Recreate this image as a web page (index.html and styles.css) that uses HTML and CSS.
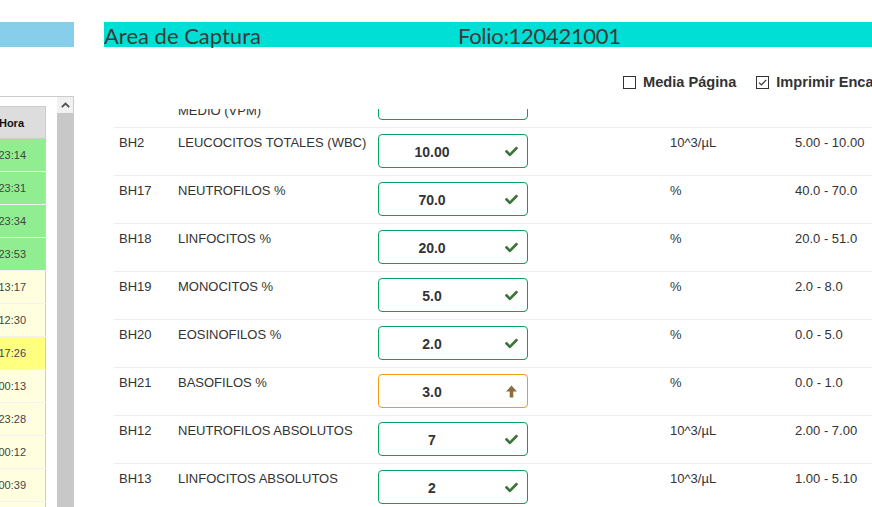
FILE: index.html
```html
<!DOCTYPE html>
<html lang="es">
<head>
  <meta charset="UTF-8">
  <title>Area de Captura</title>
  <link rel="stylesheet" href="styles.css">
</head>
<body>
  <div class="page">
    <aside class="side">
      <div class="side-title"></div>
      <div class="side-box">
        <div class="side-scroll">
          <table class="times">
            <thead>
              <tr><th class="col-date">Fecha</th><th class="col-time">Hora</th></tr>
            </thead>
            <tbody>
              <tr class="done"><td>12/04/2021</td><td>23:14</td></tr>
              <tr class="done"><td>12/04/2021</td><td>23:31</td></tr>
              <tr class="done"><td>12/04/2021</td><td>23:34</td></tr>
              <tr class="done"><td>12/04/2021</td><td>23:53</td></tr>
              <tr class="pending"><td>13/04/2021</td><td>13:17</td></tr>
              <tr class="pending"><td>13/04/2021</td><td>12:30</td></tr>
              <tr class="current"><td>13/04/2021</td><td>17:26</td></tr>
              <tr class="pending"><td>14/04/2021</td><td>00:13</td></tr>
              <tr class="pending"><td>14/04/2021</td><td>23:28</td></tr>
              <tr class="pending"><td>15/04/2021</td><td>00:12</td></tr>
              <tr class="pending"><td>15/04/2021</td><td>00:39</td></tr>
              <tr class="pending"><td>15/04/2021</td><td>01:05</td></tr>
            </tbody>
          </table>
        </div>
        <div class="scrollbar">
          <div class="scroll-btn">
            <svg width="9" height="6" viewBox="0 0 9 6"><path d="M0.8 5.2 L4.5 1.5 L8.2 5.2" fill="none" stroke="#505050" stroke-width="1.8"/></svg>
          </div>
          <div class="scroll-thumb"></div>
        </div>
      </div>
    </aside>

    <main class="main">
      <h1 class="capture-bar">
        <span class="capture-title">Area de Captura</span>
        <span class="folio">Folio:120421001</span>
      </h1>

      <div class="options">
        <label class="option">
          <span class="box"></span>
          <span>Media Página</span>
        </label>
        <label class="option">
          <span class="box">
            <svg width="11" height="11" viewBox="0 0 11 11"><path d="M2 5.6 L4.4 8 L9.2 2.8" fill="none" stroke="#333" stroke-width="1.2"/></svg>
          </span>
          <span>Imprimir Encabezado</span>
        </label>
      </div>

      <div class="results">
        <div class="results-list">
          <div class="result-row">
            <div class="cell">BH9</div>
            <div class="cell">VOLUMEN PLAQUETARIO MEDIO (VPM)</div>
            <div class="cell"><div class="value ok"><span class="num">9.5</span><span class="icon"></span></div></div>
            <div class="cell">fL</div>
            <div class="cell">7.0 - 11.0</div>
          </div>

          <div class="result-row">
            <div class="cell">BH2</div>
            <div class="cell">LEUCOCITOS TOTALES (WBC)</div>
            <div class="cell"><div class="value ok"><span class="num">10.00</span>
              <svg class="icon" viewBox="0 0 512 512"><path d="M173.9 439.4l-166.4-166.4c-10-10-10-26.2 0-36.2l36.2-36.2c10-10 26.2-10 36.2 0L192 312.7 432.1 72.6c10-10 26.2-10 36.2 0l36.2 36.2c10 10 10 26.2 0 36.2l-294.4 294.4c-10 10-26.2 10-36.2 0z"/></svg></div></div>
            <div class="cell">10^3/µL</div>
            <div class="cell">5.00 - 10.00</div>
          </div>

          <div class="result-row">
            <div class="cell">BH17</div>
            <div class="cell">NEUTROFILOS %</div>
            <div class="cell"><div class="value ok"><span class="num">70.0</span>
              <svg class="icon" viewBox="0 0 512 512"><path d="M173.9 439.4l-166.4-166.4c-10-10-10-26.2 0-36.2l36.2-36.2c10-10 26.2-10 36.2 0L192 312.7 432.1 72.6c10-10 26.2-10 36.2 0l36.2 36.2c10 10 10 26.2 0 36.2l-294.4 294.4c-10 10-26.2 10-36.2 0z"/></svg></div></div>
            <div class="cell">%</div>
            <div class="cell">40.0 - 70.0</div>
          </div>

          <div class="result-row">
            <div class="cell">BH18</div>
            <div class="cell">LINFOCITOS %</div>
            <div class="cell"><div class="value ok"><span class="num">20.0</span>
              <svg class="icon" viewBox="0 0 512 512"><path d="M173.9 439.4l-166.4-166.4c-10-10-10-26.2 0-36.2l36.2-36.2c10-10 26.2-10 36.2 0L192 312.7 432.1 72.6c10-10 26.2-10 36.2 0l36.2 36.2c10 10 10 26.2 0 36.2l-294.4 294.4c-10 10-26.2 10-36.2 0z"/></svg></div></div>
            <div class="cell">%</div>
            <div class="cell">20.0 - 51.0</div>
          </div>

          <div class="result-row">
            <div class="cell">BH19</div>
            <div class="cell">MONOCITOS %</div>
            <div class="cell"><div class="value ok"><span class="num">5.0</span>
              <svg class="icon" viewBox="0 0 512 512"><path d="M173.9 439.4l-166.4-166.4c-10-10-10-26.2 0-36.2l36.2-36.2c10-10 26.2-10 36.2 0L192 312.7 432.1 72.6c10-10 26.2-10 36.2 0l36.2 36.2c10 10 10 26.2 0 36.2l-294.4 294.4c-10 10-26.2 10-36.2 0z"/></svg></div></div>
            <div class="cell">%</div>
            <div class="cell">2.0 - 8.0</div>
          </div>

          <div class="result-row">
            <div class="cell">BH20</div>
            <div class="cell">EOSINOFILOS %</div>
            <div class="cell"><div class="value ok"><span class="num">2.0</span>
              <svg class="icon" viewBox="0 0 512 512"><path d="M173.9 439.4l-166.4-166.4c-10-10-10-26.2 0-36.2l36.2-36.2c10-10 26.2-10 36.2 0L192 312.7 432.1 72.6c10-10 26.2-10 36.2 0l36.2 36.2c10 10 10 26.2 0 36.2l-294.4 294.4c-10 10-26.2 10-36.2 0z"/></svg></div></div>
            <div class="cell">%</div>
            <div class="cell">0.0 - 5.0</div>
          </div>

          <div class="result-row">
            <div class="cell">BH21</div>
            <div class="cell">BASOFILOS %</div>
            <div class="cell"><div class="value high"><span class="num">3.0</span>
              <svg class="icon" viewBox="0 0 12 13"><path d="M6 0.5 L11.5 6.5 L7.8 6.5 L7.8 12.5 L4.2 12.5 L4.2 6.5 L0.5 6.5 Z"/></svg></div></div>
            <div class="cell">%</div>
            <div class="cell">0.0 - 1.0</div>
          </div>

          <div class="result-row">
            <div class="cell">BH12</div>
            <div class="cell">NEUTROFILOS ABSOLUTOS</div>
            <div class="cell"><div class="value ok"><span class="num">7</span>
              <svg class="icon" viewBox="0 0 512 512"><path d="M173.9 439.4l-166.4-166.4c-10-10-10-26.2 0-36.2l36.2-36.2c10-10 26.2-10 36.2 0L192 312.7 432.1 72.6c10-10 26.2-10 36.2 0l36.2 36.2c10 10 10 26.2 0 36.2l-294.4 294.4c-10 10-26.2 10-36.2 0z"/></svg></div></div>
            <div class="cell">10^3/µL</div>
            <div class="cell">2.00 - 7.00</div>
          </div>

          <div class="result-row">
            <div class="cell">BH13</div>
            <div class="cell">LINFOCITOS ABSOLUTOS</div>
            <div class="cell"><div class="value ok"><span class="num">2</span>
              <svg class="icon" viewBox="0 0 512 512"><path d="M173.9 439.4l-166.4-166.4c-10-10-10-26.2 0-36.2l36.2-36.2c10-10 26.2-10 36.2 0L192 312.7 432.1 72.6c10-10 26.2-10 36.2 0l36.2 36.2c10 10 10 26.2 0 36.2l-294.4 294.4c-10 10-26.2 10-36.2 0z"/></svg></div></div>
            <div class="cell">10^3/µL</div>
            <div class="cell">1.00 - 5.10</div>
          </div>
        </div>
      </div>
    </main>
  </div>
</body>
</html>
```

FILE: styles.css
```css
html, body {
  overflow: hidden;
}

body {
  margin: 0;
  font-family: "Liberation Sans", Arial, sans-serif;
  color: #333;
  background-color: white;
}

.page {
  display: flex;
  padding-top: 22px;
  height: 485px;
}

/* left list of orders */
.side {
  width: 74px;
  flex-shrink: 0;
}

.side-title {
  height: 25px;
  background-color: #87ceeb;
  margin-bottom: 49px;
}

.side-box {
  display: flex;
  height: 420px;
  border-top: 1px solid #ccc;
  border-right: 1px solid #ccc;
}

.side-scroll {
  flex: 1;
  display: flex;
  justify-content: flex-end;
  overflow: hidden;
  padding: 9px 11px 0 0;
}

.times {
  border-collapse: collapse;
  font-size: 11px;
  flex-shrink: 0;
}

.times th {
  height: 31px;
  background-color: #ddd;
  border: 1px solid #ccc;
  font-size: 11px;
  text-align: right;
  padding: 0 21px 0 0;
  color: #111;
}

.times .col-date {
  width: 80px;
}

.times .col-time {
  width: 25px;
}

.times td {
  height: 32px;
  padding: 0 19px 0 6px;
  border-bottom: 1px solid #f2f2f2;
  border-right: 1px solid #ccc;
  text-align: right;
  color: #444;
}

.times tr.done td {
  background-color: #90ee90;
}

.times tr.pending td {
  background-color: #ffffe0;
}

.times tr.current td {
  background-color: #ffff80;
}

.scrollbar {
  width: 16px;
  display: flex;
  flex-direction: column;
  background-color: #f1f1f1;
}

.scroll-btn {
  height: 16px;
  display: flex;
  align-items: center;
  justify-content: center;
}

.scroll-thumb {
  flex: 1;
  background-color: #c8c8c8;
}

/* main capture area */
.main {
  margin-left: 30px;
  width: 830px;
  flex-shrink: 0;
}

.capture-bar {
  display: flex;
  height: 25px;
  margin: 0;
  background-color: #00dfd5;
  font-family: Lato, "Open Sans", sans-serif;
  font-weight: normal;
  font-size: 22px;
  line-height: 27px;
  color: #3a3a3a;
  white-space: nowrap;
}

.capture-title {
  width: 354px;
}

.folio {
  letter-spacing: -0.3px;
}

.options {
  display: flex;
  gap: 20px;
  margin-top: 25px;
  padding-left: 519px;
  height: 20px;
  align-items: center;
  font-size: 14.6px;
  font-weight: bold;
  white-space: nowrap;
}

.option {
  display: flex;
  align-items: center;
  gap: 7px;
}

.box {
  width: 13px;
  height: 13px;
  box-sizing: border-box;
  border: 1px solid #333;
  display: flex;
  align-items: center;
  justify-content: center;
}

.results {
  margin-top: 17px;
  height: 420px;
  overflow: hidden;
}

.results-list {
  margin: -30px 0 0 10px;
}

.result-row {
  display: grid;
  grid-template-columns: 59px 200px 292px 125px 1fr;
  border-top: 1px solid #eee;
  padding: 6px 0 7px;
  font-size: 13px;
  line-height: 16px;
}

.cell {
  padding: 1px 5px 0;
}

.value {
  display: flex;
  align-items: center;
  width: 150px;
  height: 34px;
  box-sizing: border-box;
  margin-top: -1px;
  padding-right: 9px;
  border: 1px solid #00a65a;
  border-radius: 4px;
}

.value .num {
  flex: 1;
  padding: 2px 20px 0 0;
  text-align: center;
  font-size: 14px;
  font-weight: bold;
  color: #333;
}

.value .icon {
  width: 13px;
  height: 13px;
}

.value.ok .icon {
  fill: #3c763d;
}

.value.high {
  border-color: #f39c12;
}

.value.high .icon {
  fill: #8a6d3b;
}
```
